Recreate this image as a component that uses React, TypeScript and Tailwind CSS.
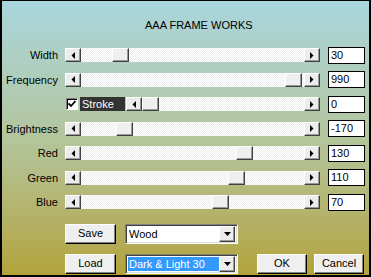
import React from 'react'

const raised =
  'border border-t-white border-l-white border-r-[#404040] border-b-[#404040] shadow-[inset_-1px_-1px_#9a9a9a] bg-[#ececec]'

function Arrow({ dir }: { dir: 'left' | 'right' }) {
  return (
    <div className={`w-[16px] h-[14px] shrink-0 flex items-center justify-center ${raised}`}>
      <svg width="4" height="7" viewBox="0 0 4 7">
        {dir === 'left' ? <polygon points="4,0 4,7 0.5,3.5" fill="#000" /> : <polygon points="0,0 0,7 3.5,3.5" fill="#000" />}
      </svg>
    </div>
  )
}

function Slider({ thumb }: { thumb: number }) {
  return (
    <div className="flex h-[14px] w-full">
      <Arrow dir="left" />
      <div className="flex-1 h-[14px] flex bg-[repeating-conic-gradient(#ffffff_0_25%,#ededed_0_50%)] bg-[length:2px_2px]">
        <div className={`w-[17px] h-[14px] ${raised} bg-[#efefef]`} style={{ marginLeft: thumb }} />
      </div>
      <Arrow dir="right" />
    </div>
  )
}

function ValueBox({ value }: { value: string }) {
  return (
    <div className="w-[37px] h-[17px] border border-black bg-white pl-[2px] text-[11px] leading-[15px] text-black">
      {value}
    </div>
  )
}

function Combo({ text, selected }: { text: string; selected?: boolean }) {
  return (
    <div className="w-[113px] h-[20px] flex items-center border border-t-[#808080] border-l-[#808080] border-r-white border-b-white shadow-[inset_1px_1px_#404040,inset_-1px_-1px_#dcdcdc] bg-white pl-[2px] pr-[2px]">
      <div className="flex-1 h-[14px] flex items-center">
        <span
          className={`h-[14px] leading-[14px] text-[11px] pl-[1px] pr-[2px] ${selected ? 'bg-[#3399ff] text-white w-[91px]' : 'text-black'}`}
        >
          {text}
        </span>
      </div>
      <div className={`w-[16px] h-[16px] flex items-center justify-center ${raised}`}>
        <svg width="7" height="4" viewBox="0 0 7 4">
          <polygon points="0,0 7,0 3.5,4" fill="#000" />
        </svg>
      </div>
    </div>
  )
}

function Button({ label, w }: { label: string; w: string }) {
  return (
    <div
      className={`${w} h-[20px] flex items-center justify-center text-[11px] text-black border border-t-white border-l-white border-r-black border-b-black shadow-[inset_-1px_-1px_#808080] bg-[#efefef]`}
    >
      {label}
    </div>
  )
}

const rows = [
  { label: 'Width', thumb: 31, value: '30' },
  { label: 'Frequency', thumb: 204, value: '990' },
  { label: '', thumb: 0, value: '0', stroke: true },
  { label: 'Brightness', thumb: 35, value: '-170' },
  { label: 'Red', thumb: 155, value: '130' },
  { label: 'Green', thumb: 147, value: '110' },
  { label: 'Blue', thumb: 131, value: '70' },
]

export default function App() {
  return (
    <div className="w-[371px] h-[277px] border-t border-l-2 border-r-2 border-b-2 border-black bg-linear-to-b from-[#a9d6de] via-[#b3c59c] via-50% to-[#b3a33a] font-['Liberation_Sans',Arial,sans-serif] text-black">
      <div className="h-[42px] pt-[17px] pl-[143px] text-[11px] leading-[14px]">AAA FRAME WORKS</div>

      <div className="flex flex-col">
        {rows.map((r, i) => (
          <div key={i} className="h-[24.5px] flex items-center">
            <div className="w-[56px] text-right text-[11px] leading-[14px]">{r.label}</div>
            <div className="w-[255px] ml-[7px] flex items-center">
              {r.stroke ? (
                <>
                  <div className="w-[12px] h-[12px] ml-[1px] shrink-0 bg-white border border-t-[#808080] border-l-[#808080] border-r-white border-b-white shadow-[inset_1px_1px_#000] flex items-center justify-center">
                    <svg width="8" height="8" viewBox="0 0 8 8">
                      <path d="M0.5 3.5 L3 6 L7.5 1" stroke="#000" strokeWidth="1.8" fill="none" />
                    </svg>
                  </div>
                  <div className="w-[45px] h-[14px] ml-[2px] shrink-0 bg-[#333333] text-white text-[11px] leading-[14px] pl-[2px]">
                    Stroke
                  </div>
                  <div className="flex-1 ml-[1px]">
                    <Slider thumb={r.thumb} />
                  </div>
                </>
              ) : (
                <Slider thumb={r.thumb} />
              )}
            </div>
            <div className="ml-[8px]">
              <ValueBox value={r.value} />
            </div>
          </div>
        ))}
      </div>

      <div className="mt-[9px] flex items-center pl-[63px]">
        <Button label="Save" w="w-[51px]" />
        <div className="ml-[9px]">
          <Combo text="Wood" />
        </div>
      </div>

      <div className="mt-[10px] flex items-center pl-[63px]">
        <Button label="Load" w="w-[51px]" />
        <div className="ml-[9px]">
          <Combo text="Dark & Light 30" selected />
        </div>
        <div className="ml-[19px]">
          <Button label="OK" w="w-[50px]" />
        </div>
        <div className="ml-[7px]">
          <Button label="Cancel" w="w-[50px]" />
        </div>
      </div>
    </div>
  )
}
